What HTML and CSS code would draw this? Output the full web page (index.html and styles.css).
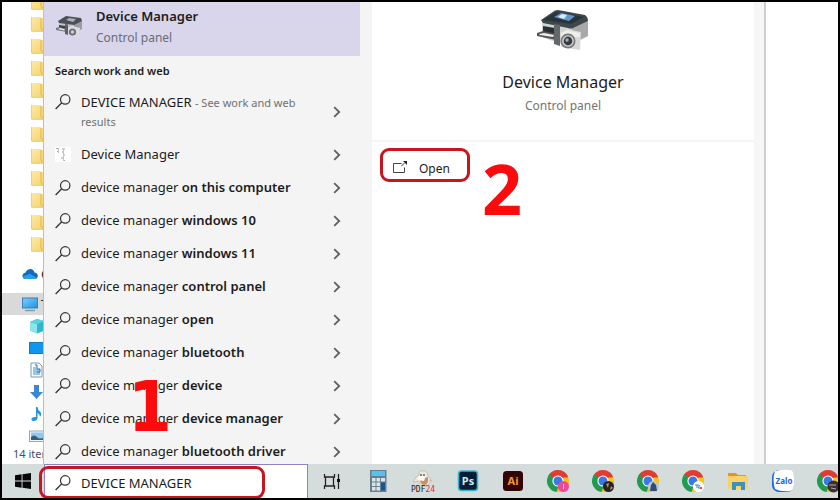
FILE: index.html
```html
<!DOCTYPE html>
<html lang="en">
<head>
<meta charset="utf-8">
<title>Device Manager search</title>
<link rel="stylesheet" href="styles.css">
</head>
<body>
<svg class="defs" aria-hidden="true">
  <defs>
    <linearGradient id="fold" x1="0" y1="0" x2="1" y2="1"><stop offset="0" stop-color="#fdeaa2"/><stop offset="1" stop-color="#f6d26c"/></linearGradient>
    <linearGradient id="scr" x1="0" y1="0" x2="1" y2="1"><stop offset="0" stop-color="#7cd0fb"/><stop offset="1" stop-color="#2490e0"/></linearGradient>
    <symbol id="folder" viewBox="0 0 14 16"><path d="M0 1h10v1h4v14H1L0 15z" fill="url(#fold)"/><path d="M10 2v10l2 3h2" fill="none" stroke="#dfb44c"/><path d="M0.5 1v14h11" fill="none" stroke="#efd078"/></symbol>
    <symbol id="glass" viewBox="0 0 16 16"><circle cx="10.2" cy="5.4" r="4.7" fill="none" stroke="#333" stroke-width="1.2"/><path d="M6.8 8.8L0.6 15" stroke="#333" stroke-width="1.3"/></symbol>
    <symbol id="chev" viewBox="0 0 8 12"><path d="M1.2 1.2L6.2 6L1.2 10.8" fill="none" stroke="#606060" stroke-width="1.8"/></symbol>
    <symbol id="printer" viewBox="0 0 54 44">
      <path d="M6 12L36 16V36L22 34L6 28z" fill="#d2d2d2"/><path d="M36 18L52 12V27L36 35z" fill="#aaa9a9"/>
      <path d="M5 11L19 1.5Q20 1 22 1L49 6Q52 8 52 12L37 19Q35 20 32 19L7 14z" fill="#3d474c"/>
      <path d="M7 11L20 3L48 8L35 15z" fill="#29343a"/>
      <path d="M18 8L25 4L39 7L33 12z" fill="#6597cf"/><path d="M22 8L26 5L31 6L28 10z" fill="#d7edff"/>
      <path d="M7 17L19 19V26L7 23z" fill="#283033"/><path d="M1 24L7 22L21 25L20 31L1 27z" fill="#555"/><path d="M3 25L8 24L18 26L17 28L4 26z" fill="#eee"/>
      <path d="M18 15L24 16V37L18 35z" fill="#62676a"/>
      <path d="M24 23L31 20L45 23L44 41L25 38z" fill="#d8d8d7"/><path d="M25 24L31 21L44 24V28L25 28z" fill="#eeeeec"/>
      <circle cx="32" cy="32" r="7.5" fill="#777"/><circle cx="32" cy="32" r="5.8" fill="#d7d7d5"/><circle cx="32" cy="32" r="4.4" fill="#383d43"/><circle cx="31" cy="31" r="1.7" fill="#9caec0"/>
    </symbol>
    <symbol id="printer-small" viewBox="0 0 28 24">
      <path d="M3 7L18 9V19L3 15z" fill="#c6c6cc"/><path d="M18 9L26 6V14L18 18z" fill="#9a9aa2"/>
      <path d="M2 6L10 1L25 3L26 6L18 10L3 8z" fill="#4b5056"/><path d="M10 5L13 3L20 4L17 7z" fill="#a9b1bb"/>
      <path d="M3 10L10 11V15L3 13z" fill="#3e4347"/><path d="M0 13L3 12L11 14V17L0 15z" fill="#74777c"/><path d="M2 14L4 13L9 14.500L8 15.500z" fill="#f0f0f4"/>
      <path d="M9 9L12 9.500V20L9 19z" fill="#5c6064"/><path d="M12 13L16 11L24 13L23 22L13 21z" fill="#dcdce2"/>
      <circle cx="16.500" cy="17" r="3.600" fill="#6b6e74"/><circle cx="16.500" cy="17" r="1.800" fill="#c9ccd2"/>
    </symbol>
    <symbol id="chrome" viewBox="0 0 24 24">
      <path d="M12 12L2.47 6.5A11 11 0 0 1 21.53 6.5z" fill="#dd3d32"/>
      <path d="M12 12L21.53 6.5A11 11 0 0 1 12 23z" fill="#fbc116"/>
      <path d="M12 12L12 23A11 11 0 0 1 2.47 6.5z" fill="#229b50"/>
      <path d="M12 6.5H21.6L22 8.5H13z" fill="#dd3d32"/><path d="M16.8 14.7L12 23L10.5 22.9L13.5 15z" fill="#fbc116"/><path d="M7.2 14.7L2.47 6.5L4 4.7L9 12z" fill="#229b50"/>
      <circle cx="12" cy="12" r="5.6" fill="#fff"/><circle cx="12" cy="12" r="4.5" fill="#3b78e4"/>
    </symbol>
  </defs>
</svg>
<div class="screen">
  <main class="desktop">
    <aside class="explorer">
      <div class="node sub"><svg class="folder"><use href="#folder"/></svg></div>
      <div class="node sub"><svg class="folder"><use href="#folder"/></svg></div>
      <div class="node sub"><svg class="folder"><use href="#folder"/></svg></div>
      <div class="node sub"><svg class="folder"><use href="#folder"/></svg></div>
      <div class="node sub"><svg class="folder"><use href="#folder"/></svg></div>
      <div class="node sub"><svg class="folder"><use href="#folder"/></svg></div>
      <div class="node sub"><svg class="folder"><use href="#folder"/></svg></div>
      <div class="node sub"><svg class="folder"><use href="#folder"/></svg></div>
      <div class="node sub"><svg class="folder"><use href="#folder"/></svg></div>
      <div class="node sub"><svg class="folder"><use href="#folder"/></svg></div>
      <div class="node sub"><svg class="folder"><use href="#folder"/></svg></div>
      <div class="node sub"><svg class="folder"><use href="#folder"/></svg></div>
      <div class="node root"><svg class="ic" viewBox="0 0 16 16"><path d="M3 13Q0 12 0.5 9Q1 7 3.5 6.5Q5 3 8.500 3Q11.500 3 12.500 6.500Q16 7 15.800 10Q15.500 13 12.500 13z" fill="#0f6cc4"/><path d="M3 13Q1 12.500 1 10.500L8 8L15 12Q14 13 12.500 13z" fill="#2aa0ea"/></svg>OneDrive</div>
      <div class="node root current"><svg class="ic" viewBox="0 0 16 16"><rect x="0.500" y="2" width="15" height="10" fill="url(#scr)" stroke="#3a7fb5"/><path d="M3 14.500H13" stroke="#7f9bb0" stroke-width="1.500"/></svg>This PC</div>
      <div class="node"><svg class="ic" viewBox="0 0 16 16"><path d="M1 4L8 1L15 3V13L8 15.500L1 12.500z" fill="#2fb8cd"/><path d="M1 4L8 6V15.500L1 12.500z" fill="#8fe3ea"/><path d="M1 4L8 1L15 3L8 6z" fill="#5fd0dd"/></svg></div>
      <div class="node"><svg class="ic" viewBox="0 0 16 16"><rect x="0.500" y="2.500" width="15" height="11" fill="#0f96ee" stroke="#2277b2"/></svg></div>
      <div class="node"><svg class="ic" viewBox="0 0 16 16"><path d="M2 1H10L13 4V15H2z" fill="#f5fafd" stroke="#8199a9"/><path d="M4 6H7M4 8H11M4 10H11M4 12H11" stroke="#3d91cf"/><path d="M6 3H8V7H11V10H8" stroke="#2b6da9" fill="none"/></svg></div>
      <div class="node"><svg class="ic" viewBox="0 0 16 16"><path d="M5 1H10V8H14L7.500 15L1 8H5z" fill="#3a88cf"/></svg></div>
      <div class="node"><svg class="ic" viewBox="0 0 16 16"><path d="M7 1H8.500Q8.500 4 11.500 6Q13 8 11 11Q11 8 8.500 7V12Q8 15 4.500 15Q2 14.500 2.500 12.500Q3.500 10.500 7 11z" fill="#1e95e0"/></svg></div>
      <div class="node"><svg class="ic" viewBox="0 0 16 16"><rect x="0.500" y="3" width="15" height="10.500" fill="#f5f5f5" stroke="#9aa6ad"/><path d="M2 4.500H15V12H2z" fill="#8fc7ef"/><path d="M2 9Q5 6 8 9T15 9V12H2z" fill="#355f78"/></svg></div>
      <div class="status">14 items</div>
    </aside>

    <section class="results">
      <a class="best" href="#"><svg class="best-icon"><use href="#printer-small"/></svg><span class="best-text"><b>Device Manager</b><small>Control panel</small></span></a>
      <h2>Search work and web</h2>
      <a class="row tall" href="#"><svg class="glass"><use href="#glass"/></svg><span class="label">DEVICE MANAGER <small>- See work and web results</small></span><svg class="chev"><use href="#chev"/></svg></a>
      <a class="row" href="#"><svg class="glass" viewBox="0 0 16 16"><path d="M0 0H16V15H0z" fill="#fff"/><path d="M1 1.500H4M2 4.500H4M7 2H10M7 5H9M8 8H10M6 11H9M8 13.500H10" stroke="#a5a5a5" fill="none"/><path d="M3.500 1V6M8.500 2V14" stroke="#c4c4c4"/></svg><span class="label">Device Manager</span><svg class="chev"><use href="#chev"/></svg></a>
      <a class="row" href="#"><svg class="glass"><use href="#glass"/></svg><span class="label">device manager <b>on this computer</b></span><svg class="chev"><use href="#chev"/></svg></a>
      <a class="row" href="#"><svg class="glass"><use href="#glass"/></svg><span class="label">device manager <b>windows 10</b></span><svg class="chev"><use href="#chev"/></svg></a>
      <a class="row" href="#"><svg class="glass"><use href="#glass"/></svg><span class="label">device manager <b>windows 11</b></span><svg class="chev"><use href="#chev"/></svg></a>
      <a class="row" href="#"><svg class="glass"><use href="#glass"/></svg><span class="label">device manager <b>control panel</b></span><svg class="chev"><use href="#chev"/></svg></a>
      <a class="row" href="#"><svg class="glass"><use href="#glass"/></svg><span class="label">device manager <b>open</b></span><svg class="chev"><use href="#chev"/></svg></a>
      <a class="row" href="#"><svg class="glass"><use href="#glass"/></svg><span class="label">device manager <b>bluetooth</b></span><svg class="chev"><use href="#chev"/></svg></a>
      <a class="row" href="#"><svg class="glass"><use href="#glass"/></svg><span class="label">device manager <b>device</b></span><svg class="chev"><use href="#chev"/></svg></a>
      <a class="row" href="#"><svg class="glass"><use href="#glass"/></svg><span class="label">device manager <b>device manager</b></span><svg class="chev"><use href="#chev"/></svg></a>
      <a class="row" href="#"><svg class="glass"><use href="#glass"/></svg><span class="label">device manager <b>bluetooth driver</b></span><svg class="chev"><use href="#chev"/></svg></a>
    </section>

    <section class="preview">
      <div class="hero">
        <svg class="hero-icon"><use href="#printer"/></svg>
        <h1>Device Manager</h1>
        <p>Control panel</p>
      </div>
      <button class="open" type="button"><svg class="open-icon" viewBox="0 0 16 14"><path d="M9.500 2.500H1.500V11.500H12.500V6.500" fill="none" stroke="#444"/><path d="M9.500 5L12.500 2" stroke="#333"/><path d="M11 0H15V4z" fill="#222"/></svg>Open</button>
    </section>
    <div class="edge"></div>
    <div class="rest"></div>
  </main>

  <footer class="taskbar">
    <button class="start" type="button" aria-label="Start"><svg class="win" viewBox="0 0 16 16"><path d="M0 2.200L6.600 1.300V7.500H0zM7.500 1.200L16 0V7.500H7.500zM0 8.500H6.600V14.700L0 13.800zM7.500 8.500H16V16L7.500 14.800z" fill="#080808"/></svg></button>
    <label class="search"><svg class="glass"><use href="#glass"/></svg><input type="text" value="DEVICE MANAGER" aria-label="Search"></label>
    <button class="app view" type="button" aria-label="Task view"><svg class="app-ic" viewBox="0 0 24 24"><path d="M4.500 5V8H14.500V5M4.500 20V17H14.500V20M5.500 8V17M13.500 8V17M18.500 5V20" fill="none" stroke="#222" stroke-width="1.300"/><rect x="17" y="10" width="3" height="3" fill="#111"/></svg></button>
    <button class="app" type="button" aria-label="Calculator"><svg class="app-ic" viewBox="0 0 24 24"><rect x="4" y="1" width="16.500" height="22" fill="#68808b"/><rect x="5.500" y="2" width="13.500" height="5" fill="#57c3ec"/><g fill="#dce5e9"><path d="M6 9H9.500V12.500H6zM10.500 9H14V12.500H10.500zM15 9H19V12.500H15zM6 13.500H9.500V17H6zM10.500 13.500H14V17H10.500zM6 18H9.500V21.500H6zM10.500 18H14V21.500H10.500z"/></g><path d="M15 13.500H19V21.500H15z" fill="#17539b"/></svg></button>
    <button class="app" type="button" aria-label="PDF24"><svg class="app-ic" viewBox="0 0 24 24"><path d="M5 8L2 13L8 12Q9 17 14 17Q19 17 19 11L21 12L17 7Q16 1 12 2Q8 1 8 6z" fill="#eee9dc" stroke="#b7aa97" stroke-width=".6"/><path d="M9 10L17 8Q18 16 13 16Q9 15 9 10z" fill="#c98f61"/><path d="M8 7L15 7L13 12L7 11z" fill="#fff"/><circle cx="10" cy="6" r=".8"/><circle cx="13" cy="6" r=".8"/><text class="pdf" x="0" y="23">PDF<tspan fill="#e3263c">24</tspan></text></svg></button>
    <button class="app" type="button" aria-label="Photoshop"><svg class="app-ic" viewBox="0 0 24 24"><rect x="2.500" y="2" width="19" height="19.500" rx="3" fill="#061e35" stroke="#36b9d4" stroke-width="1.600"/><text class="tile ps" x="12" y="16">Ps</text></svg></button>
    <button class="app" type="button" aria-label="Illustrator"><svg class="app-ic" viewBox="0 0 24 24"><rect x="2" y="2" width="20" height="20" rx="3.500" fill="#330405"/><text class="tile ai" x="12" y="16">Ai</text></svg></button>
    <button class="app" type="button" aria-label="Chrome profile 1"><svg class="app-ic" viewBox="0 0 24 24"><use href="#chrome"/><circle cx="17.500" cy="17.500" r="5.500" fill="#ee4897"/><path d="M17.500 15V20" stroke="#ffc1e1"/></svg></button>
    <button class="app" type="button" aria-label="Chrome profile 2"><svg class="app-ic" viewBox="0 0 24 24"><use href="#chrome"/><circle cx="17.500" cy="17.500" r="5.500" fill="#29231f"/><path d="M15 15L18 14L17 19z" fill="#ba8f76"/><path d="M20 17L22 19L19 21z" fill="#a9957d"/></svg></button>
    <button class="app" type="button" aria-label="Chrome profile 3"><svg class="app-ic" viewBox="0 0 24 24"><use href="#chrome"/><circle cx="17.500" cy="17.500" r="5.500" fill="#b8c7d6"/><path d="M17 13L20 16L21 22H14L15 16z" fill="#344c70"/></svg></button>
    <button class="app" type="button" aria-label="Chrome profile 4"><svg class="app-ic" viewBox="0 0 24 24"><use href="#chrome"/><circle cx="17.500" cy="17.500" r="5.500" fill="#fff"/><path d="M14 16H18M16 16V19M19 16L17 19H20" stroke="#4d7cc2" fill="none"/><circle cx="20" cy="19" r="1.200" fill="#e25548"/></svg></button>
    <button class="app" type="button" aria-label="File Explorer"><svg class="app-ic" viewBox="0 0 24 24"><path d="M2 4H10L12 6H20V9H2z" fill="#dc9a22"/><path d="M2 7H22V20H2z" fill="#fbd267"/><path d="M6 13H19V21H15V17H10V21H6z" fill="#3c91c0"/></svg></button>
    <button class="app" type="button" aria-label="Zalo"><svg class="app-ic" viewBox="0 0 24 24"><rect x="1" y="1" width="22" height="22" rx="7" fill="#1467e8"/><path d="M4 2Q12 0 19 1Q23 2 23 8V16Q23 21 19 22Q10 23 4 20Q1 11 4 2z" fill="#fff"/><text class="tile zalo" x="13" y="15">Zalo</text></svg></button>
    <button class="app" type="button" aria-label="Chrome profile 5"><svg class="app-ic" viewBox="0 0 24 24"><use href="#chrome"/><circle cx="17.500" cy="17.500" r="6" fill="#3b3031"/><path d="M13 16H20M15 19L20 20" stroke="#c0a9a4"/></svg></button>
  </footer>

  <div class="frame frame-search"></div>
  <div class="frame frame-open"></div>
  <div class="step step-one">1</div>
  <div class="step step-two">2</div>
</div>
</body>
</html>
```
FILE: styles.css
```css
* { box-sizing: border-box; }
body { margin: 0; font-family: "Noto Sans", "Open Sans", sans-serif; font-size: 13px; color: #1c1c1c; }
a { color: inherit; text-decoration: none; }
button { border: 0; padding: 0; background: none; font: inherit; color: inherit; }
svg { flex: none; display: block; }
.defs { position: absolute; width: 0; height: 0; }
.screen { position: relative; display: flex; flex-direction: column; height: 100vh; border: 2px solid #000; background: #fff; overflow: hidden; }
.desktop { flex: 1; min-height: 0; display: flex; overflow: hidden; }

.explorer { flex: none; width: 42px; display: flex; flex-direction: column; justify-content: flex-end; overflow: hidden; border-right: 1px solid #bdbdbd; white-space: nowrap; }
.node { flex: none; height: 22px; display: flex; align-items: center; padding-left: 27px; }
.node.sub { padding-left: 29px; }
.node.root { height: 22px; margin-top: 8px; padding-left: 20px; gap: 3px; }
.node.current { background: #d9d9d9; }
.folder { width: 14px; height: 16px; }
.ic { width: 16px; height: 16px; }
.status { flex: none; height: 17px; line-height: 14px; padding-left: 11px; font-size: 11px; color: #44506a; }

.results { flex: none; width: 328px; background: #f4f4f4; overflow: hidden; }
.best { display: flex; align-items: center; gap: 12px; height: 54px; margin-right: 12px; padding: 0 0 4px 12px; background: #d9d6ec; }
.best-icon { width: 28px; height: 24px; }
.best-text { display: flex; flex-direction: column; line-height: 21px; }
.best-text small { font-size: 12px; color: #6c6a76; }
h2 { margin: 0; height: 30px; padding-left: 11px; font-size: 11px; line-height: 30px; font-weight: 600; }
.row { display: flex; align-items: center; height: 33px; padding: 0 31px 0 11px; gap: 10px; }
.row.tall { height: 52px; }
.row b, .best b { font-weight: 600; }
.row small { font-size: 11px; color: #707070; }
.label { flex: 1; line-height: 19px; }
.tall .label { padding-right: 20px; }
.glass { width: 16px; height: 16px; }
.tall .glass { align-self: flex-start; margin-top: 8px; }
.chev { width: 8px; height: 12px; }

.preview { flex: 1; background: #fff; }
.hero { height: 140px; padding-top: 7px; border-bottom: 2px solid #f5f5f5; display: flex; flex-direction: column; align-items: center; }
.hero-icon { width: 54px; height: 44px; }
h1 { margin: 15px 0 0; font-size: 16px; line-height: 28px; font-weight: 400; }
.hero p { margin: 0; font-size: 12px; line-height: 20px; color: #757575; }
.open { display: flex; align-items: center; gap: 11px; margin: 10px 0 0 20px; height: 32px; font-size: 12px; }
.open-icon { width: 16px; height: 14px; }
.edge { flex: none; width: 12px; background: #f6f6f6; border-right: 2px solid #cfcfcf; }
.rest { flex: none; width: 72px; }

.taskbar { flex: none; display: flex; height: 34px; background: #d5dddc; overflow: hidden; }
.start { flex: none; width: 42px; display: flex; align-items: center; justify-content: center; }
.win { width: 16px; height: 16px; }
.search { flex: none; display: flex; align-items: center; gap: 10px; width: 264px; padding: 2px 0 0 10px; background: #fff; border: 1px solid #8d81c9; border-bottom: 0; }
.search input { flex: 1; min-width: 0; padding: 0; border: 0; outline: 0; background: none; font: inherit; color: inherit; }
.app { flex: none; width: 45px; display: flex; align-items: center; justify-content: center; }
.app.view { width: 47px; }
.app-ic { width: 24px; height: 24px; }
.tile { font-family: "Noto Sans", sans-serif; font-weight: 700; font-size: 11px; text-anchor: middle; }
.ps { fill: #c8efff; }
.ai { fill: #f79a1c; }
.zalo { font-size: 8px; fill: #1b66d8; }
.pdf { font-family: "DejaVu Sans Mono", monospace; font-size: 8px; fill: #222; }

.frame { position: absolute; border: 3px solid #c8161e; border-radius: 9px; }
.frame-search { left: 37px; top: 464px; width: 226px; height: 33px; }
.frame-open { left: 378px; top: 146px; width: 90px; height: 34px; }
.step { position: absolute; font-family: "DejaVu Sans Condensed", "DejaVu Sans", sans-serif; font-weight: 700; font-size: 70px; line-height: 70px; color: #fb0b0c; }
.step-one { left: 126px; top: 370px; }
.step-two { left: 480px; top: 151px; font-family: "Open Sans", sans-serif; }
```
